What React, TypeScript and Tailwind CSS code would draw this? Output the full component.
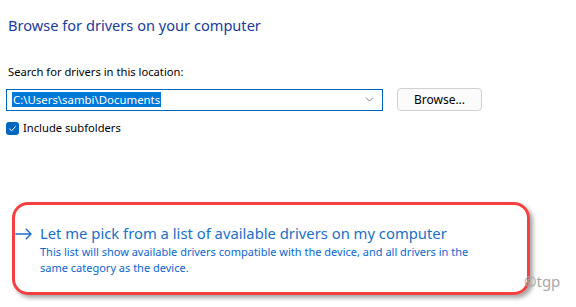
import { ChevronDown } from "lucide-react";

const FONT = { fontFamily: '"Noto Sans", "Open Sans", sans-serif' };

export default function App() {
  return (
    <div className="relative h-[307px] w-[576px] overflow-hidden bg-white text-black" style={FONT}>
      <div className="px-2 pt-[15px]">
        <h1 className="text-[14.6px] leading-5 text-[#1b3a9c]">Browse for drivers on your computer</h1>

        <p className="mt-[29px] text-[11.2px] leading-4">Search for drivers in this location:</p>

        <div className="mt-[8px] flex items-center gap-[14px]">
          <div className="-ml-[2px] flex h-[22px] w-[377px] items-center justify-between border border-[#0067c0] bg-white pl-[5px] pr-[6px]">
            <span className="bg-[#0078d7] px-[1px] text-[11.4px] leading-[15px] text-white">C:\Users\sambi\Documents</span>
            <ChevronDown size={13} strokeWidth={1.25} className="text-[#444]" />
          </div>
          <button className="h-[23px] w-[85px] rounded-[4px] border border-[#d0d0d0] bg-[#fbfbfb] text-[12px] leading-none text-black">
            Browse...
          </button>
        </div>

        <label className="mt-[9px] flex items-center gap-[4px] text-[11.2px] leading-4">
          <span className="-ml-[2px] flex h-[13px] w-[13px] items-center justify-center rounded-[3px] bg-[#0067c0]">
            <svg width="9" height="9" viewBox="0 0 10 10" fill="none">
              <path d="M1.5 5.2 L4 7.6 L8.6 2.6" stroke="white" strokeWidth="1.1" />
            </svg>
          </span>
          Include subfolders
        </label>
      </div>

      <div className="mt-[87px] flex items-start gap-[8px] pl-[15px]">
        <svg width="17" height="12" viewBox="0 0 17 12" fill="none" className="mt-[5px] shrink-0">
          <path d="M0.5 6 H16 M10.8 0.8 L16 6 L10.8 11.2" stroke="#1a6fc9" strokeWidth="1.4" />
        </svg>
        <div>
          <p className="text-[14.8px] leading-5 text-[#1a6fc9]">Let me pick from a list of available drivers on my computer</p>
          <p className="mt-[0.5px] w-[446px] text-[11px] leading-4 text-[#0a66d0]">
            This list will show available drivers compatible with the device, and all drivers in the same category as the device.
          </p>
        </div>
      </div>

      <div className="pointer-events-none absolute left-[12px] top-[202px] h-[93px] w-[518px] rounded-[16px] border-[3px] border-[#f44040] shadow-[3px_3px_4px_rgba(0,0,0,0.35)]" />

      <span className="absolute left-[524px] top-[270px] text-[15px] text-[#a8a8a8]">©tgp</span>
    </div>
  );
}
